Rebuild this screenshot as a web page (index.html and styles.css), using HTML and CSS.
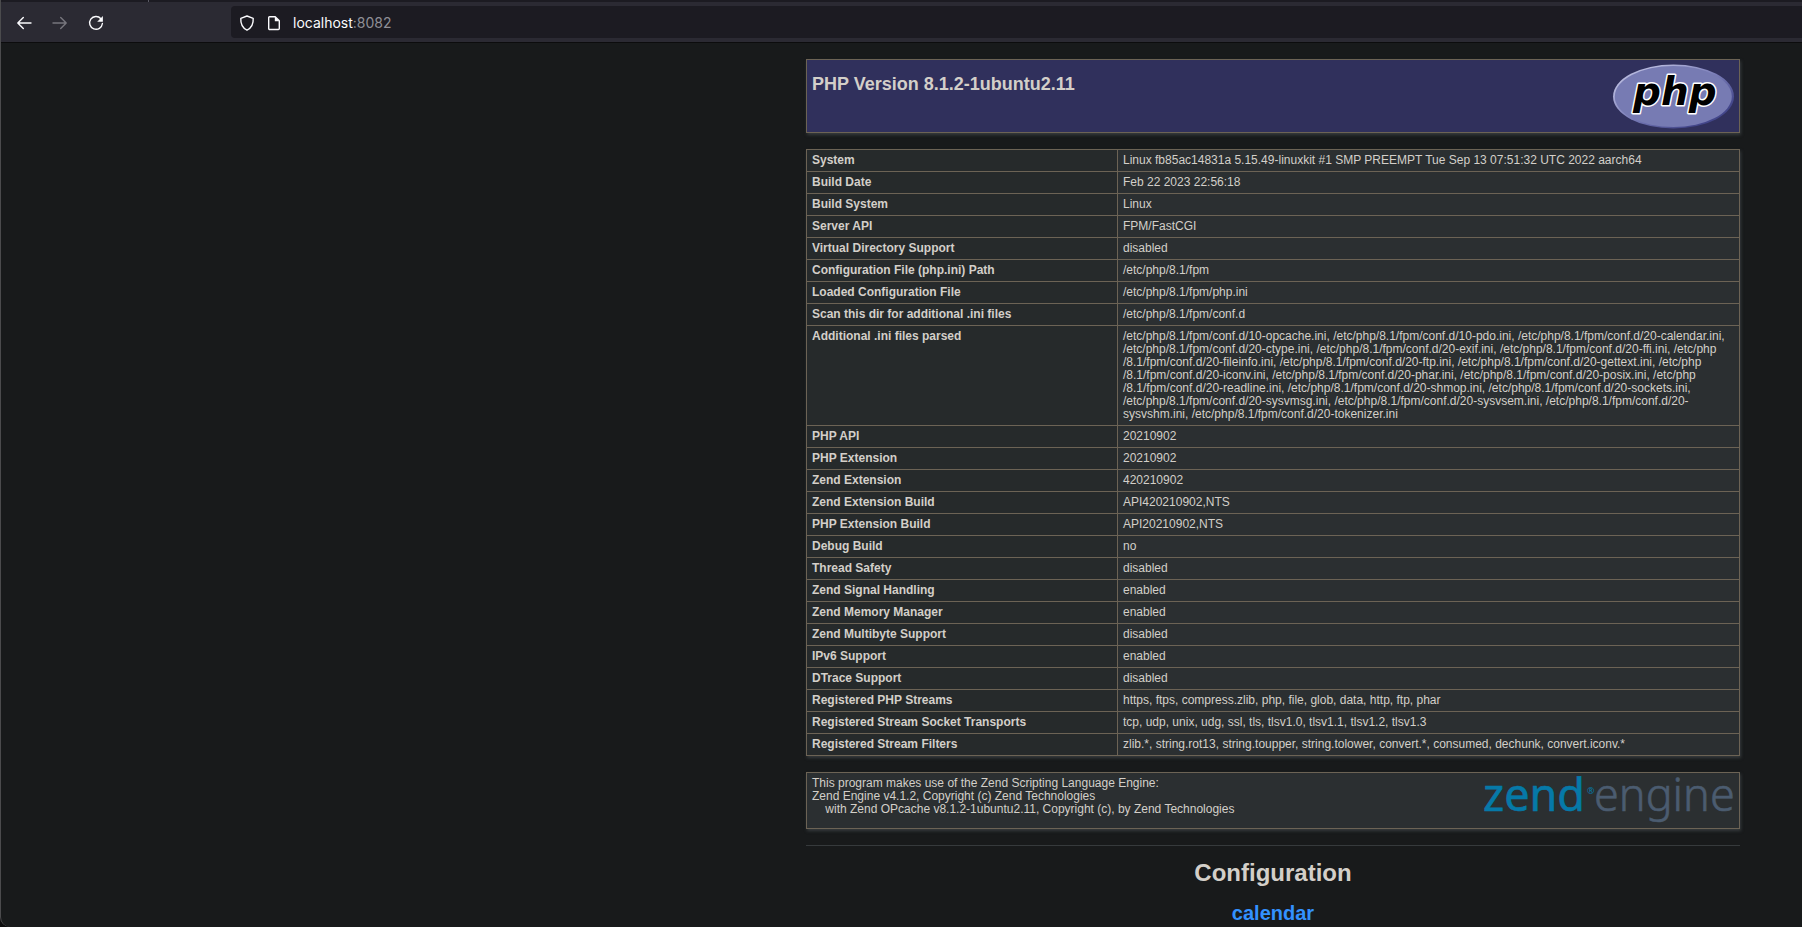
FILE: index.html
```html
<!DOCTYPE html>
<html lang="en">
<head>
<meta charset="utf-8">
<title>PHP 8.1.2-1ubuntu2.11 - phpinfo()</title>
<link rel="stylesheet" href="styles.css">
</head>
<body>
<div class="window">
  <div class="tabstrip"><span class="tab-divider"></span></div>
  <header class="toolbar">
    <nav class="nav-buttons">
      <button class="tool" type="button" aria-label="Back"><svg viewBox="0 0 16 16" width="16" height="16"><path d="M15 8H2M7.3 2.5 1.8 8l5.500 5.500"/></svg></button>
      <button class="tool tool-off" type="button" aria-label="Forward" disabled><svg viewBox="0 0 16 16" width="16" height="16"><path d="M1 8h13M8.700 2.500 14.200 8l-5.500 5.500"/></svg></button>
      <button class="tool" type="button" aria-label="Reload"><svg viewBox="0 0 16 16" width="16" height="16"><path d="M12.900 3.700A6.400 6.400 0 1 0 14.400 8.500"/><path class="solid" d="M14.900 1v5.300a.5.5 0 0 1-.5.500H9.200z"/></svg></button>
    </nav>
    <div class="urlbar">
      <svg class="icon" viewBox="0 0 16 16" width="16" height="16"><path d="M8 1 14.200 3.300C14.500 8.500 12.500 13 8 15.200 3.500 13 1.500 8.500 1.800 3.300z"/></svg>
      <svg class="icon" viewBox="0 0 16 16" width="16" height="16"><path d="M3.500 1.700h5.700l4.100 4.100v7.700a1 1 0 0 1-1 1H3.700a1 1 0 0 1-1-1v-11a.8.8 0 0 1 .8-.8z"/><path class="solid" d="M8.800 1.500v4.700h4.700z"/></svg>
      <span class="address"><b>localhost</b>:8082</span>
    </div>
  </header>
  <main class="viewport">
    <div class="center">
      <section class="box banner">
        <h1>PHP Version 8.1.2-1ubuntu2.11</h1>
        <svg class="php-logo" viewBox="0 0 121 65" width="121" height="65" role="img" aria-label="PHP logo">
          <defs><linearGradient id="rim" x1="0" y1="0" x2="1" y2="1"><stop offset="0.2" stop-color="#b4b6dc"/><stop offset="0.5" stop-color="#7a7db8"/><stop offset="0.8" stop-color="#43468a"/></linearGradient></defs>
          <ellipse cx="60.500" cy="32.500" rx="60.500" ry="32" fill="url(#rim)"/>
          <ellipse cx="60.300" cy="32.500" rx="58.500" ry="30.500" fill="#777bb3"/>
          <text class="php-word" x="20" y="41">php</text>
        </svg>
      </section>
      <table class="info">
        <tbody>
          <tr><th scope="row">System</th><td>Linux fb85ac14831a 5.15.49-linuxkit #1 SMP PREEMPT Tue Sep 13 07:51:32 UTC 2022 aarch64</td></tr>
          <tr><th scope="row">Build Date</th><td>Feb 22 2023 22:56:18</td></tr>
          <tr><th scope="row">Build System</th><td>Linux</td></tr>
          <tr><th scope="row">Server API</th><td>FPM/FastCGI</td></tr>
          <tr><th scope="row">Virtual Directory Support</th><td>disabled</td></tr>
          <tr><th scope="row">Configuration File (php.ini) Path</th><td>/etc/php/8.1/fpm</td></tr>
          <tr><th scope="row">Loaded Configuration File</th><td>/etc/php/8.1/fpm/php.ini</td></tr>
          <tr><th scope="row">Scan this dir for additional .ini files</th><td>/etc/php/8.1/fpm/conf.d</td></tr>
          <tr><th scope="row">Additional .ini files parsed</th><td>/etc/php/8.1/fpm/conf.d/10-opcache.ini, /etc/php/8.1/fpm/conf.d/10-pdo.ini, /etc/php/8.1/fpm/conf.d/20-calendar.ini,<br>/etc/php/8.1/fpm/conf.d/20-ctype.ini, /etc/php/8.1/fpm/conf.d/20-exif.ini, /etc/php/8.1/fpm/conf.d/20-ffi.ini, /etc/php<br>/8.1/fpm/conf.d/20-fileinfo.ini, /etc/php/8.1/fpm/conf.d/20-ftp.ini, /etc/php/8.1/fpm/conf.d/20-gettext.ini, /etc/php<br>/8.1/fpm/conf.d/20-iconv.ini, /etc/php/8.1/fpm/conf.d/20-phar.ini, /etc/php/8.1/fpm/conf.d/20-posix.ini, /etc/php<br>/8.1/fpm/conf.d/20-readline.ini, /etc/php/8.1/fpm/conf.d/20-shmop.ini, /etc/php/8.1/fpm/conf.d/20-sockets.ini,<br>/etc/php/8.1/fpm/conf.d/20-sysvmsg.ini, /etc/php/8.1/fpm/conf.d/20-sysvsem.ini, /etc/php/8.1/fpm/conf.d/20-<br>sysvshm.ini, /etc/php/8.1/fpm/conf.d/20-tokenizer.ini</td></tr>
          <tr><th scope="row">PHP API</th><td>20210902</td></tr>
          <tr><th scope="row">PHP Extension</th><td>20210902</td></tr>
          <tr><th scope="row">Zend Extension</th><td>420210902</td></tr>
          <tr><th scope="row">Zend Extension Build</th><td>API420210902,NTS</td></tr>
          <tr><th scope="row">PHP Extension Build</th><td>API20210902,NTS</td></tr>
          <tr><th scope="row">Debug Build</th><td>no</td></tr>
          <tr><th scope="row">Thread Safety</th><td>disabled</td></tr>
          <tr><th scope="row">Zend Signal Handling</th><td>enabled</td></tr>
          <tr><th scope="row">Zend Memory Manager</th><td>enabled</td></tr>
          <tr><th scope="row">Zend Multibyte Support</th><td>disabled</td></tr>
          <tr><th scope="row">IPv6 Support</th><td>enabled</td></tr>
          <tr><th scope="row">DTrace Support</th><td>disabled</td></tr>
          <tr><th scope="row">Registered PHP Streams</th><td>https, ftps, compress.zlib, php, file, glob, data, http, ftp, phar</td></tr>
          <tr><th scope="row">Registered Stream Socket Transports</th><td>tcp, udp, unix, udg, ssl, tls, tlsv1.0, tlsv1.1, tlsv1.2, tlsv1.3</td></tr>
          <tr><th scope="row">Registered Stream Filters</th><td>zlib.*, string.rot13, string.toupper, string.tolower, convert.*, consumed, dechunk, convert.iconv.*</td></tr>
        </tbody>
      </table>
      <section class="box engine">
        <p>This program makes use of the Zend Scripting Language Engine:<br>Zend Engine v4.1.2, Copyright (c) Zend Technologies<br>&nbsp;&nbsp;&nbsp;&nbsp;with Zend OPcache v8.1.2-1ubuntu2.11, Copyright (c), by Zend Technologies</p>
        <svg class="zend-logo" viewBox="0 0 251 47" width="251" height="47" role="img" aria-label="Zend logo">
          <text class="zend" x="0" y="34">zend</text>
          <text class="reg" x="104" y="17">®</text>
          <text class="eng" x="111" y="34">engine</text>
        </svg>
      </section>
      <hr>
      <h1 class="title">Configuration</h1>
      <h2 class="module"><a href="#module_calendar" id="module_calendar">calendar</a></h2>
    </div>
  </main>
</div>
</body>
</html>
```
FILE: styles.css
```css
* { box-sizing: border-box; }
body { margin: 0; background: #0c0c0d; color: #d3cfc9; font-family: "Liberation Sans", Arial, Helvetica, sans-serif; }
.window { height: 100vh; display: flex; flex-direction: column; overflow: hidden; border-left: 1px solid #4b4b4d; border-bottom-left-radius: 10px; background: #181a1b; }
.tabstrip { flex: none; height: 2px; padding-left: 147px; background: #1c1b22; }
.tab-divider { display: block; width: 1px; height: 2px; background: #5b5b66; }
.toolbar { flex: none; display: flex; align-items: center; height: 41px; padding: 4px 0; background: #2b2a33; border-bottom: 1px solid #0c0c0d; }
.nav-buttons { flex: none; display: flex; gap: 20px; width: 230px; padding: 2px 0 0 15px; }
.tool { display: flex; padding: 0; border: 0; background: none; color: #fbfbfe; }
.tool-off { color: #77767d; }
.tool svg, .icon { fill: none; stroke: currentColor; stroke-width: 1.4; stroke-linecap: round; stroke-linejoin: round; }
.tool .solid, .icon .solid { fill: currentColor; stroke: none; }
.urlbar { flex: 1; display: flex; align-items: center; height: 32px; padding: 1px 0 0 8px; gap: 11px; background: #1c1b22; border-radius: 4px 0 0 4px; color: #fbfbfe; }
.address { padding-top: 1px; font: 14px/20px Inter, sans-serif; color: #8f8f96; }
.address b { font-weight: 400; color: #fbfbfe; }
.viewport { flex: 1; min-height: 0; overflow: hidden; padding: 16px 62px 0 16px; }
.center { max-width: 934px; margin-left: auto; }
.box { display: flex; justify-content: space-between; padding: 4px 5px; border: 1px solid #6c6355; background: #2b2f31; box-shadow: 1px 2px 3px #363b3d; font-size: 12px; line-height: 13px; }
.banner { height: 74px; margin-bottom: 16px; background: #30305c; }
.banner h1 { margin: 10px 0 0; font-size: 18px; line-height: 21px; }
.php-logo, .zend-logo { flex: none; overflow: visible; }
.php-word { font: italic 700 39px "DejaVu Sans", sans-serif; fill: #000; stroke: #fff; stroke-width: 3; paint-order: stroke; stroke-linejoin: round; }
.info { width: 100%; table-layout: fixed; border-collapse: collapse; box-shadow: 1px 2px 3px #363b3d; font-size: 12px; line-height: 13px; }
.info th, .info td { padding: 4px 5px; border: 1px solid #6c6355; vertical-align: top; text-align: left; }
.info th { width: 311px; background: #262a2b; }
.info td { background: #2b2f31; white-space: nowrap; }
.engine { margin-top: 16px; height: 57px; }
.engine p { margin: 0; }
.zend, .eng { font: 45px "Noto Sans", sans-serif; fill: #0679a8; stroke: #0679a8; stroke-width: 0.6; }
.eng { font-weight: 300; fill: #4b5c70; stroke: #4b5c70; }
.reg { font: 9px "Noto Sans", sans-serif; fill: #0679a8; }
hr { height: 1px; margin: 16px 0 13px; border: 0; background: #363a3c; }
.title { margin: 0; font-size: 24px; line-height: 27px; text-align: center; }
.module { margin: 16px 0 0; font-size: 20px; line-height: 23px; text-align: center; }
.module a { color: #3391ff; text-decoration: none; }
```
